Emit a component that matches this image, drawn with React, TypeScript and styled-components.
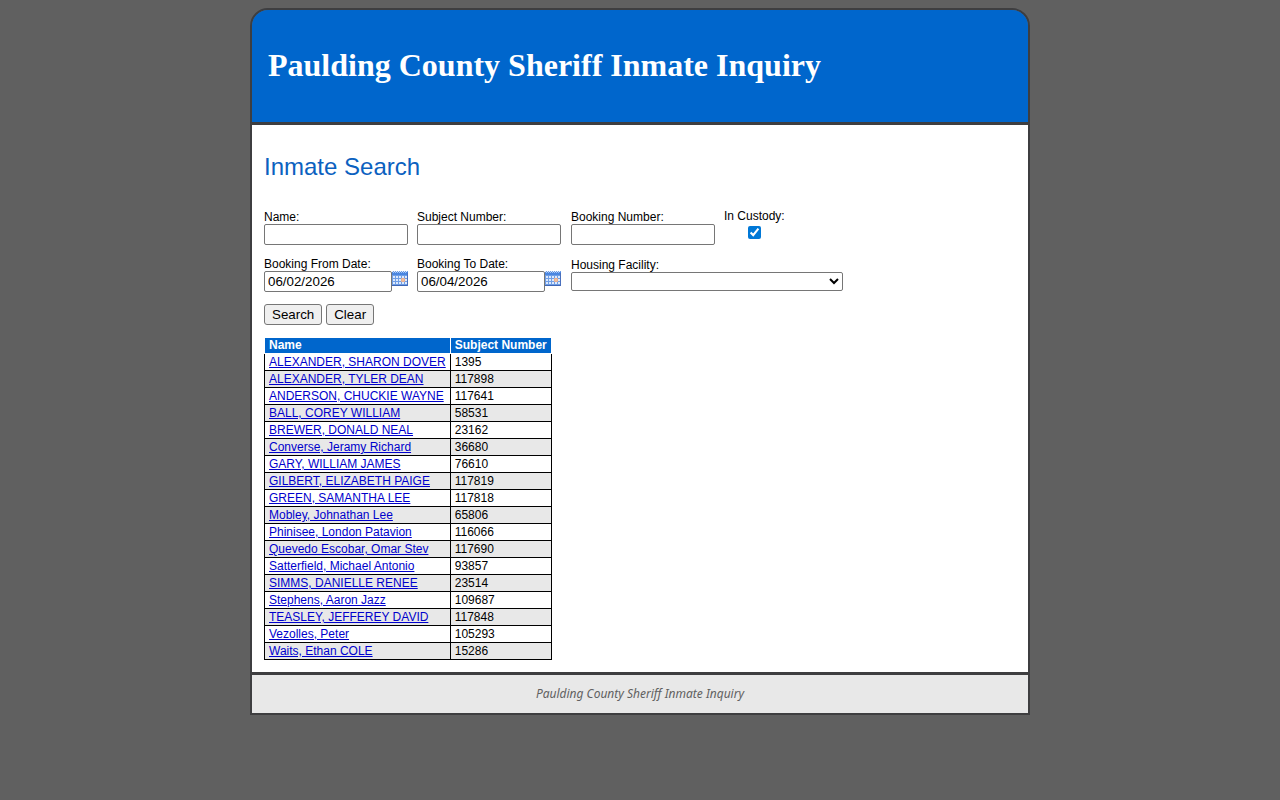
import React from "react";
import styled, { createGlobalStyle } from "styled-components";

const GlobalStyle = createGlobalStyle`
  body {
    margin: 0;
    background: #606060;
    color: #000;
    font: 12px/14px "Liberation Sans", Arial, sans-serif;
  }
`;

const Page = styled.div`
  box-sizing: border-box;
  max-width: 780px;
  margin: 8px auto;
  border: 2px solid #3e3e40;
  border-radius: 18px 18px 0 0;
  overflow: hidden;
`;

const Header = styled.header`
  padding: 37px 16px 38px;
  background: #0066cc;
  border-bottom: 3px solid #3e3e40;
`;

const Title = styled.h1`
  margin: 0;
  color: #fff;
  font: bold 32px/37px "Liberation Serif", "Times New Roman", serif;
`;

const Main = styled.main`
  padding: 28px 12px 12px;
  background: #fff;
`;

const Heading = styled.h2`
  margin: 0 0 28px;
  color: #0b61bf;
  font-size: 24px;
  font-weight: normal;
  line-height: 28px;
`;

const Fields = styled.div`
  display: grid;
  grid-template-columns: 153px 154px 153px auto;
  grid-template-rows: 36px 35px;
  justify-content: start;
  row-gap: 12px;
`;

const Field = styled.div<{ $wide?: boolean; $centered?: boolean }>`
  display: flex;
  flex-direction: column;
  justify-content: ${(p) => (p.$centered ? "flex-start" : "flex-end")};
  justify-self: start;
  align-items: ${(p) => (p.$centered ? "center" : "flex-start")};
  grid-column: ${(p) => (p.$wide ? "span 2" : "auto")};
`;

const Label = styled.label`
  line-height: 14px;
`;

const TextInput = styled.input<{ $short?: boolean }>`
  box-sizing: border-box;
  width: ${(p) => (p.$short ? 128 : 144)}px;
  height: 21px;
  margin: 0;
  padding: 1px 3px;
  border: 1px solid #767676;
  border-radius: 2px;
  background: #fff;
  color: #000;
  font-family: "Liberation Sans", Arial, sans-serif;
`;

const Check = styled.input`
  width: 13px;
  height: 13px;
  margin: 3px;
  accent-color: #0078d7;
`;

const Select = styled.select`
  box-sizing: border-box;
  width: 272px;
  height: 19px;
  margin: 0 0 1px;
  border: 1px solid #767676;
  border-radius: 2px;
  background-color: #fff;
  font-family: "Liberation Sans", Arial, sans-serif;
`;

const DateRow = styled.div`
  display: flex;
  align-items: flex-start;
`;

const CalendarButton = styled.button`
  display: block;
  width: 16px;
  height: 15px;
  padding: 0;
  border: 0;
  background: none;
  cursor: pointer;

  svg {
    display: block;
  }
`;

const Actions = styled.div`
  display: flex;
  gap: 4px;
  margin: 12px 0;
`;

const Button = styled.button`
  height: 21px;
  padding: 1px 7px;
  border: 1px solid #767676;
  border-radius: 3px;
  background: #efefef;
  color: #000;
  font-family: "Liberation Sans", Arial, sans-serif;
`;

const Table = styled.table`
  border-collapse: collapse;
  line-height: 14px;
`;

const HeadCell = styled.th`
  padding: 1px 4px;
  border: 1px solid #fff;
  background: #0066cc;
  color: #fff;
  line-height: 13px;
  text-align: left;
`;

const Row = styled.tr`
  &:nth-child(even) {
    background: #e8e8e8;
  }
`;

const Cell = styled.td`
  padding: 1px 4px;
  border: 1px solid #000;
`;

const InmateLink = styled.a`
  color: #0000cc;
  text-decoration: underline;
`;

const Footer = styled.footer`
  padding: 12px;
  border-top: 3px solid #3e3e40;
  background: #e8e8e8;
  color: #606060;
  font: italic 12px/14px "Trebuchet MS", "Noto Sans", sans-serif;
  text-align: center;
`;

const inmates: [string, string][] = [
  ["ALEXANDER, SHARON DOVER", "1395"],
  ["ALEXANDER, TYLER DEAN", "117898"],
  ["ANDERSON, CHUCKIE WAYNE", "117641"],
  ["BALL, COREY WILLIAM", "58531"],
  ["BREWER, DONALD NEAL", "23162"],
  ["Converse, Jeramy Richard", "36680"],
  ["GARY, WILLIAM JAMES", "76610"],
  ["GILBERT, ELIZABETH PAIGE", "117819"],
  ["GREEN, SAMANTHA LEE", "117818"],
  ["Mobley, Johnathan Lee", "65806"],
  ["Phinisee, London Patavion", "116066"],
  ["Quevedo Escobar, Omar Stev", "117690"],
  ["Satterfield, Michael Antonio", "93857"],
  ["SIMMS, DANIELLE RENEE", "23514"],
  ["Stephens, Aaron Jazz", "109687"],
  ["TEASLEY, JEFFEREY DAVID", "117848"],
  ["Vezolles, Peter", "105293"],
  ["Waits, Ethan COLE", "15286"],
];

function CalendarIcon() {
  const rows = [5, 8, 11];
  const cols = [1, 4, 7, 10, 13];
  return (
    <svg width="16" height="15" viewBox="0 0 16 15" shapeRendering="crispEdges" aria-hidden="true">
      <rect width="16" height="15" fill="#6f9ee6" />
      <rect y="1" width="16" height="3" fill="#4a86e0" />
      <rect y="14" width="16" height="1" fill="#3f66b4" />
      <rect x="15" y="2" width="1" height="13" fill="#4a70bd" />
      {[0, 2, 4, 6, 8, 10, 12, 14].map((x) => (
        <rect key={x} x={x} y="0" width="1" height="1" fill="#e6effc" />
      ))}
      {[1, 3, 5, 7, 9, 11, 13].map((x) => (
        <rect key={x} x={x} y="1" width="1" height="1" fill="#a9c7f3" />
      ))}
      {rows.map((y) =>
        cols.map((x) => (
          <rect key={`${x}-${y}`} x={x} y={y} width="2" height="2" fill="#dce9fc" />
        ))
      )}
      <rect x="9" y="7" width="4" height="4" fill="#dfae98" />
      <rect x="10" y="8" width="2" height="2" fill="#f8c193" />
    </svg>
  );
}

function TextField({ id, label }: { id: string; label: string }) {
  return (
    <Field>
      <Label htmlFor={id}>{label}</Label>
      <TextInput id={id} type="text" />
    </Field>
  );
}

function DateField({ id, label, value }: { id: string; label: string; value: string }) {
  return (
    <Field>
      <Label htmlFor={id}>{label}</Label>
      <DateRow>
        <TextInput id={id} type="text" defaultValue={value} $short />
        <CalendarButton type="button" aria-label="Choose date">
          <CalendarIcon />
        </CalendarButton>
      </DateRow>
    </Field>
  );
}

export default function App() {
  return (
    <>
      <GlobalStyle />
      <Page>
        <Header>
          <Title>Paulding County Sheriff Inmate Inquiry</Title>
        </Header>
        <Main>
          <Heading>Inmate Search</Heading>
          <form onSubmit={(e) => e.preventDefault()}>
            <Fields>
              <TextField id="name" label="Name:" />
              <TextField id="subject-number" label="Subject Number:" />
              <TextField id="booking-number" label="Booking Number:" />
              <Field $centered>
                <Label htmlFor="in-custody">In Custody:</Label>
                <Check id="in-custody" type="checkbox" defaultChecked />
              </Field>
              <DateField id="booking-from" label="Booking From Date:" value="06/02/2026" />
              <DateField id="booking-to" label="Booking To Date:" value="06/04/2026" />
              <Field $wide>
                <Label htmlFor="facility">Housing Facility:</Label>
                <Select id="facility" />
              </Field>
            </Fields>
            <Actions>
              <Button type="submit">Search</Button>
              <Button type="reset">Clear</Button>
            </Actions>
          </form>
          <Table>
            <thead>
              <tr>
                <HeadCell scope="col">Name</HeadCell>
                <HeadCell scope="col">Subject Number</HeadCell>
              </tr>
            </thead>
            <tbody>
              {inmates.map(([name, number]) => (
                <Row key={number}>
                  <Cell>
                    <InmateLink href="#">{name}</InmateLink>
                  </Cell>
                  <Cell>{number}</Cell>
                </Row>
              ))}
            </tbody>
          </Table>
        </Main>
        <Footer>Paulding County Sheriff Inmate Inquiry</Footer>
      </Page>
    </>
  );
}
